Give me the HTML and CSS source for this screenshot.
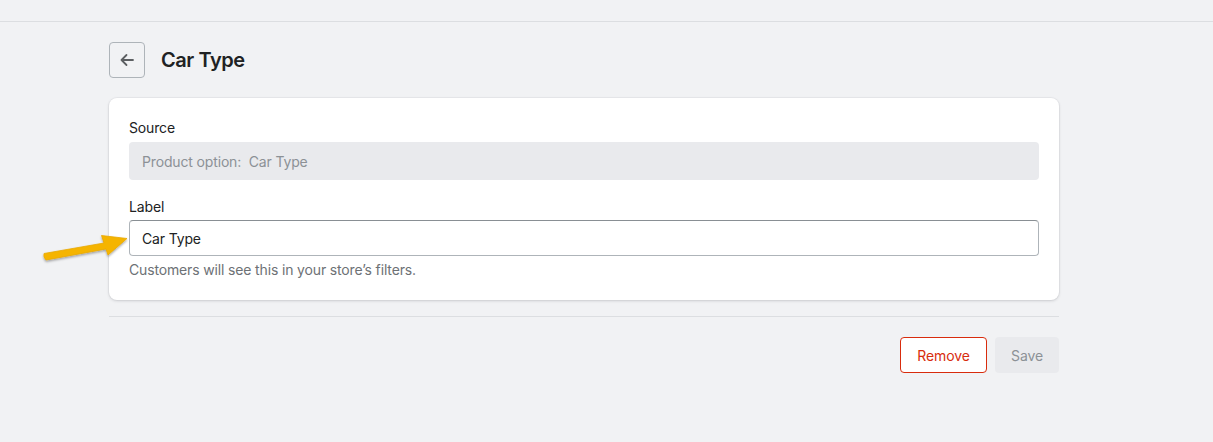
FILE: index.html
```html
<!DOCTYPE html>
<html lang="en">
<head>
<meta charset="utf-8">
<title>Car Type</title>
<link rel="stylesheet" href="styles.css">
</head>
<body>
<div class="topbar"></div>
<main class="page">
  <div class="header">
    <button class="back" aria-label="Back">
      <svg width="20" height="20" viewBox="0 0 20 20"><path d="M16 10H4.5M9.5 5L4.5 10l5 5" fill="none" stroke="#5c5f62" stroke-width="1.8" stroke-linecap="round" stroke-linejoin="round"/></svg>
    </button>
    <h1 class="title">Car Type</h1>
  </div>
  <section class="card">
    <div class="field">
      <label class="label">Source</label>
      <div class="readonly">Product option:&nbsp; Car Type</div>
    </div>
    <div class="field field-label">
      <label class="label" for="lbl">Label</label>
      <div class="input-wrap">
        <input id="lbl" class="input" type="text" value="Car Type">
        <svg class="pointer" width="90" height="36" viewBox="0 0 90 36">
          <defs><filter id="sh" x="-20%" y="-50%" width="140%" height="200%"><feDropShadow dx="0" dy="1.5" stdDeviation="1.2" flood-color="#000" flood-opacity="0.35"/></filter></defs>
          <path d="M3 24.5 L63 14 L60.5 6.5 L86 9.5 L67 26 L65 20 L5 31 Q2 28 3 24.5 Z" fill="#f5b400" stroke="#eaa900" stroke-width="0.8" stroke-linejoin="round" filter="url(#sh)"/>
        </svg>
      </div>
      <p class="help">Customers will see this in your store’s filters.</p>
    </div>
  </section>
  <div class="divider"></div>
  <div class="actions">
    <button class="btn btn-remove">Remove</button>
    <button class="btn btn-save" disabled>Save</button>
  </div>
</main>
</body>
</html>
```
FILE: styles.css
```css
* { box-sizing: border-box; }
html, body { margin: 0; padding: 0; }
body {
  background: #f1f2f4;
  font-family: Inter, "Noto Sans", sans-serif;
  font-size: 14px;
  letter-spacing: -0.15px;
  color: #202223;
  height: 442px;
  overflow: hidden;
}
.topbar {
  height: 22px;
  border-bottom: 1px solid #dcdee1;
}
.page {
  width: 950px;
  margin-left: 109px;
  padding-top: 20px;
}
.header {
  display: flex;
  align-items: center;
  gap: 16px;
  height: 36px;
}
.back {
  width: 36px;
  height: 36px;
  border: 1px solid #aeb4b9;
  border-radius: 4px;
  background: #f1f2f4;
  display: flex;
  align-items: center;
  justify-content: center;
  padding: 0;
}
.title {
  margin: 0;
  font-size: 20px;
  font-weight: 600;
  color: #202223;
  letter-spacing: -0.45px;
}
.card {
  margin-top: 20px;
  background: #fff;
  border-radius: 8px;
  box-shadow: 0 0 0 1px rgba(63,63,68,0.04), 0 1px 3px rgba(63,63,68,0.18);
  padding: 20px 20px 20px;
}
.field { display: flex; flex-direction: column; }
.field-label { margin-top: 17px; }
.label {
  font-size: 14px;
  line-height: 20px;
  margin-bottom: 4px;
  color: #202223;
}
.field-label .label { margin-bottom: 3px; }
.readonly {
  height: 38px;
  background: #e9eaed;
  border-radius: 4px;
  color: #8c9196;
  padding: 0 13px;
  display: flex;
  align-items: center;
  font-size: 14px;
}
.input-wrap { position: relative; }
.input {
  width: 100%;
  height: 36px;
  border: 1px solid #aeb4b9;
  border-top-color: #898f94;
  border-radius: 4px;
  padding: 0 12px;
  font-family: inherit;
  font-size: 14px;
  letter-spacing: -0.15px;
  color: #202223;
  background: #fff;
  outline: none;
}
.pointer {
  position: absolute;
  left: -88px;
  top: 9px;
  overflow: visible;
}
.help {
  margin: 4px 0 0;
  color: #6d7175;
  font-size: 14px;
  line-height: 20px;
}
.divider {
  margin-top: 16px;
  border-top: 1px solid #dcdee1;
}
.actions {
  display: flex;
  justify-content: flex-end;
  gap: 8px;
  margin-top: 20px;
}
.btn {
  height: 36px;
  border-radius: 4px;
  font-family: inherit;
  font-size: 14px;
  font-weight: 400;
  letter-spacing: -0.1px;
  padding: 0 16px;
}
.btn-remove {
  width: 87px;
  background: #fff;
  border: 1px solid #d82c0d;
  color: #d82c0d;
}
.btn-save {
  width: 64px;
  background: #e9eaed;
  border: none;
  color: #8c9196;
}
```
